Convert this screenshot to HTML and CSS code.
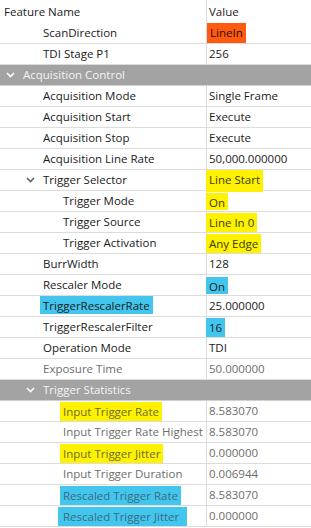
FILE: index.html
```html
<!DOCTYPE html>
<html lang="en">
<head>
    <meta charset="UTF-8">
    <meta name="viewport" content="width=device-width, initial-scale=1.0">
    <title>Feature Grid</title>
    <link rel="stylesheet" href="styles.css">
</head>
<body>
    <div class="grid">
        <div class="row head">
            <div class="name">Feature Name</div>
            <div class="value">Value</div>
        </div>

        <div class="row">
            <div class="name lv1"><span class="gap"></span>ScanDirection</div>
            <div class="value"><span class="mark orange">LineIn</span></div>
        </div>
        <div class="row">
            <div class="name lv1"><span class="gap"></span>TDI Stage P1</div>
            <div class="value">256</div>
        </div>

        <!-- 分类：Acquisition Control -->
        <div class="row cat">
            <div class="name lv0"><span class="gap"><svg class="chev" viewBox="0 0 9 6"><path d="M1 1 L4.5 4.5 L8 1"/></svg></span>Acquisition Control</div>
        </div>
        <div class="row">
            <div class="name lv1"><span class="gap"></span>Acquisition Mode</div>
            <div class="value">Single Frame</div>
        </div>
        <div class="row">
            <div class="name lv1"><span class="gap"></span>Acquisition Start</div>
            <div class="value">Execute</div>
        </div>
        <div class="row">
            <div class="name lv1"><span class="gap"></span>Acquisition Stop</div>
            <div class="value">Execute</div>
        </div>
        <div class="row">
            <div class="name lv1"><span class="gap"></span>Acquisition Line Rate</div>
            <div class="value">50,000.000000</div>
        </div>
        <div class="row">
            <div class="name lv1"><span class="gap"><svg class="chev dark" viewBox="0 0 9 6"><path d="M1 1 L4.5 4.5 L8 1"/></svg></span>Trigger Selector</div>
            <div class="value"><span class="mark yellow first">Line Start</span></div>
        </div>
        <div class="row">
            <div class="name lv2"><span class="gap"></span>Trigger Mode</div>
            <div class="value"><span class="mark yellow small">On</span></div>
        </div>
        <div class="row">
            <div class="name lv2"><span class="gap"></span>Trigger Source</div>
            <div class="value"><span class="mark yellow">Line In 0</span></div>
        </div>
        <div class="row">
            <div class="name lv2"><span class="gap"></span>Trigger Activation</div>
            <div class="value"><span class="mark yellow">Any Edge</span></div>
        </div>
        <div class="row">
            <div class="name lv1"><span class="gap"></span>BurrWidth</div>
            <div class="value">128</div>
        </div>
        <div class="row">
            <div class="name lv1"><span class="gap"></span>Rescaler Mode</div>
            <div class="value"><span class="mark blue small">On</span></div>
        </div>
        <div class="row">
            <div class="name lv1"><span class="gap"></span><span class="mark blue up">TriggerRescalerRate</span></div>
            <div class="value">25.000000</div>
        </div>
        <div class="row">
            <div class="name lv1"><span class="gap"></span>TriggerRescalerFilter</div>
            <div class="value"><span class="mark blue">16</span></div>
        </div>
        <div class="row">
            <div class="name lv1"><span class="gap"></span>Operation Mode</div>
            <div class="value">TDI</div>
        </div>
        <div class="row off">
            <div class="name lv1"><span class="gap"></span>Exposure Time</div>
            <div class="value">50.000000</div>
        </div>

        <!-- 分类：Trigger Statistics -->
        <div class="row cat">
            <div class="name lv1"><span class="gap"><svg class="chev" viewBox="0 0 9 6"><path d="M1 1 L4.5 4.5 L8 1"/></svg></span>Trigger Statistics</div>
        </div>
        <div class="row off">
            <div class="name lv2"><span class="gap"></span><span class="mark yellow">Input Trigger Rate</span></div>
            <div class="value">8.583070</div>
        </div>
        <div class="row off">
            <div class="name lv2"><span class="gap"></span>Input Trigger Rate Highest</div>
            <div class="value">8.583070</div>
        </div>
        <div class="row off">
            <div class="name lv2"><span class="gap"></span><span class="mark yellow">Input Trigger Jitter</span></div>
            <div class="value">0.000000</div>
        </div>
        <div class="row off">
            <div class="name lv2"><span class="gap"></span>Input Trigger Duration</div>
            <div class="value">0.006944</div>
        </div>
        <div class="row off">
            <div class="name lv2"><span class="gap"></span><span class="mark blue">Rescaled Trigger Rate</span></div>
            <div class="value">8.583070</div>
        </div>
        <div class="row off">
            <div class="name lv2"><span class="gap"></span><span class="mark blue wide">Rescaled Trigger Jitter</span></div>
            <div class="value">0.000000</div>
        </div>
    </div>
</body>
</html>
```

FILE: styles.css
```css
body {
    margin: 0;
    background: #fff;
    font-family: "Open Sans", "Noto Sans", sans-serif;
    font-size: 11.5px;
    color: #1a1a1a;
    overflow: hidden;
}
.grid {
    width: 311px;
}
.row {
    display: flex;
    height: 20px;
    border-bottom: 1px solid #dcdcdc;
    line-height: 20px;
}
.row.head {
    height: 23px;
    line-height: 23px;
    border-bottom: none;
}
.name {
    box-sizing: border-box;
    width: 207px;
    flex: none;
    display: flex;
    align-items: center;
    padding-left: 4px;
    border-right: 1px solid #dcdcdc;
    white-space: nowrap;
}
.value {
    flex: 1;
    padding-left: 2px;
    white-space: nowrap;
    display: flex;
    align-items: center;
}
.lv0 { padding-left: 4px; }
.lv1 { padding-left: 24px; }
.lv2 { padding-left: 44px; }
.gap {
    width: 19px;
    flex: none;
    display: flex;
    align-items: center;
}
.chev {
    width: 9px;
    height: 6px;
    margin-left: 2px;
    fill: none;
    stroke: #fff;
    stroke-width: 1.6;
}
.chev.dark {
    stroke: #606060;
}
.row.cat {
    background: #a3a3a3;
    color: #f4f4f4;
    border-bottom-color: #d0d0d0;
}
.row.cat .name {
    border-right: none;
    width: 100%;
}
.row.off {
    color: #6d6d6d;
}
.mark {
    display: inline-block;
    height: 19px;
    line-height: 19px;
    padding: 0 3px;
    margin-left: -3px;
}
.mark.orange {
    background: #ff5a12;
    height: 20px;
    margin-left: -2px;
    color: #2a1000;
}
.mark.yellow {
    background: #fff200;
    color: #3a3a00;
}
.row.off .mark.yellow {
    color: #6b6b30;
}
.mark.blue {
    background: #43c6ee;
}
.row.off .mark.blue {
    color: #3a6c80;
}
.mark.first {
    height: 22px;
    margin-top: 2px;
}
.mark.small {
    height: 17px;
}
.mark.up {
    margin-top: -3px;
    height: 18px;
}
.mark.wide {
    padding-right: 8px;
    margin-left: -5px;
    padding-left: 5px;
}
```
